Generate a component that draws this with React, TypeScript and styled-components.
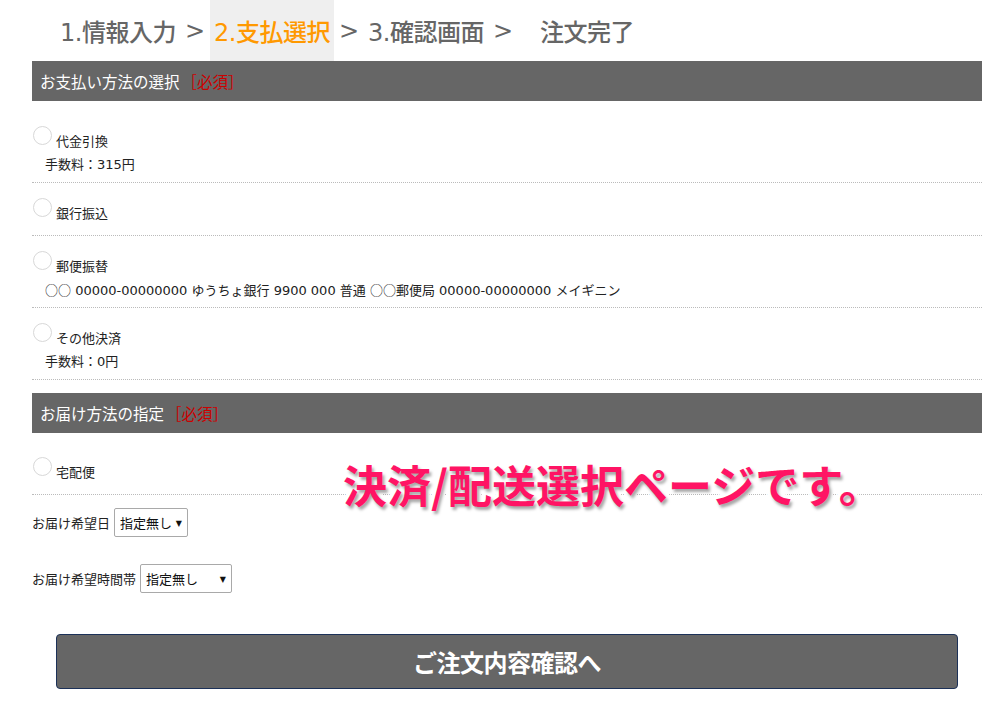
import React from 'react';
import styled, { createGlobalStyle } from 'styled-components';

const GlobalStyle = createGlobalStyle`
	html, body {
		margin: 0;
		padding: 0;
		background: #ffffff;
	}
	body {
		font-family: "DejaVu Sans", "Noto Sans CJK JP", sans-serif;
		color: #222;
	}
`;

const Page = styled.div`
	position: relative;
	width: 986px;
	height: 701px;
	overflow: hidden;
`;

const Steps = styled.ol`
	display: flex;
	align-items: stretch;
	list-style: none;
	margin: 0;
	padding: 0 0 0 56px;
	height: 61px;
`;

const Step = styled.li<{ active?: boolean; spaced?: boolean }>`
	display: flex;
	align-items: center;
	padding: 0 4px;
	margin-left: ${({ spaced }) => (spaced ? '18px' : '0')};
	font-size: 24px;
	font-weight: 500;
	letter-spacing: -0.5px;
	color: ${({ active }) => (active ? '#ff9900' : '#666666')};
	background: ${({ active }) => (active ? '#efefef' : 'transparent')};
`;

const Arrow = styled.li`
	display: flex;
	align-items: center;
	padding: 0 5px;
	font-size: 24px;
	color: #666666;
`;

const Content = styled.div`
	margin: 0 4px 0 32px;
`;

const SectionHead = styled.h2<{ gap?: number }>`
	margin: ${({ gap }) => gap ?? 0}px 0 0;
	height: 40px;
	display: flex;
	align-items: center;
	padding: 0 8px;
	background: #666666;
	color: #ffffff;
	font-size: 15.5px;
	font-weight: normal;
`;

const Required = styled.span`
	color: #cc0000;
	margin-left: 2px;
`;

const OptionList = styled.ul<{ gap: number }>`
	list-style: none;
	margin: ${({ gap }) => gap}px 0 0;
	padding: 0;
`;

const Option = styled.li`
	padding: 15px 0 9px;
	border-bottom: 1px dotted #bbbbbb;
`;

const RadioLine = styled.label`
	display: flex;
	align-items: flex-start;
	gap: 4px;
	height: 28px;
	cursor: pointer;
`;

const Radio = styled.span`
	display: block;
	width: 17px;
	height: 17px;
	border: 1px solid #d8d8d8;
	border-radius: 50%;
	background: #ffffff;
	margin-left: 1px;
`;

const OptionLabel = styled.span`
	padding-top: 8px;
	font-size: 13px;
	line-height: 15px;
	color: #222;
`;

const Note = styled.div`
	height: 17px;
	padding: 2px 0 0 13px;
	font-size: 13px;
	line-height: 17px;
	color: #222;
	white-space: nowrap;
`;

const Mark = styled.span`
	font-family: "Noto Sans CJK JP", sans-serif;
`;

const Field = styled.div<{ gap: number }>`
	display: flex;
	align-items: center;
	height: 29px;
	margin-top: ${({ gap }) => gap}px;
	font-size: 13px;
	color: #222;
`;

const SelectWrap = styled.span`
	position: relative;
	display: flex;
	margin-left: 4px;
`;

const Select = styled.select<{ w: number }>`
	appearance: none;
	-webkit-appearance: none;
	box-sizing: border-box;
	width: ${({ w }) => w}px;
	height: 29px;
	padding: 0 0 0 5px;
	border: 1px solid #a9a9a9;
	border-radius: 2px;
	background: #ffffff;
	font-family: "Noto Sans CJK JP", sans-serif;
	font-size: 13px;
	color: #111;
`;

const Caret = styled.span`
	position: absolute;
	right: 6px;
	top: 50%;
	transform: translateY(-50%);
	font-size: 8px;
	color: #111;
	pointer-events: none;
`;

const Submit = styled.button`
	display: block;
	width: 902px;
	height: 55px;
	margin: 41px auto 0;
	background: #666666;
	border: 1px solid #1c3158;
	border-radius: 4px;
	color: #ffffff;
	font-family: "Noto Sans CJK JP", sans-serif;
	font-size: 24px;
	font-weight: bold;
	letter-spacing: -0.5px;
	cursor: pointer;
`;

const Annotation = styled.div`
	position: absolute;
	left: 343px;
	top: 452px;
	font-family: "Noto Sans CJK JP", sans-serif;
	font-size: 44px;
	font-weight: bold;
	color: #ff1464;
	-webkit-text-stroke: 8px #ffffff;
	paint-order: stroke fill;
	text-shadow: 2px 3px 3px rgba(0, 0, 0, 0.35);
	white-space: nowrap;
`;

const payments: { label: string; note?: React.ReactNode }[] = [
	{ label: '代金引換', note: '手数料：315円' },
	{ label: '銀行振込' },
	{
		label: '郵便振替',
		note: (
			<>
				<Mark>○○</Mark> 00000-00000000 ゆうちょ銀行 9900 000 普通 <Mark>○○</Mark>郵便局 00000-00000000 メイギニン
			</>
		),
	},
	{ label: 'その他決済', note: '手数料：0円' },
];

export default function App() {
	return (
		<Page>
			<GlobalStyle />
			<Steps>
				<Step>1.情報入力</Step>
				<Arrow>&gt;</Arrow>
				<Step active>2.支払選択</Step>
				<Arrow>&gt;</Arrow>
				<Step>3.確認画面</Step>
				<Arrow>&gt;</Arrow>
				<Step spaced>注文完了</Step>
			</Steps>
			<Content>
				<SectionHead>
					お支払い方法の選択<Required>［必須］</Required>
				</SectionHead>
				<OptionList gap={10}>
					{payments.map((p) => (
						<Option key={p.label}>
							<RadioLine>
								<Radio />
								<OptionLabel>{p.label}</OptionLabel>
							</RadioLine>
							{p.note && <Note>{p.note}</Note>}
						</Option>
					))}
				</OptionList>
				<SectionHead gap={13}>
					お届け方法の指定<Required>［必須］</Required>
				</SectionHead>
				<OptionList gap={9}>
					<Option>
						<RadioLine>
							<Radio />
							<OptionLabel>宅配便</OptionLabel>
						</RadioLine>
					</Option>
				</OptionList>
				<Field gap={13}>
					お届け希望日
					<SelectWrap>
						<Select w={74} defaultValue="none">
							<option value="none">指定無し</option>
						</Select>
						<Caret>▼</Caret>
					</SelectWrap>
				</Field>
				<Field gap={27}>
					お届け希望時間帯
					<SelectWrap>
						<Select w={92} defaultValue="none">
							<option value="none">指定無し</option>
						</Select>
						<Caret>▼</Caret>
					</SelectWrap>
				</Field>
				<Submit>ご注文内容確認へ</Submit>
			</Content>
			<Annotation>決済/配送選択ページです。</Annotation>
		</Page>
	);
}
